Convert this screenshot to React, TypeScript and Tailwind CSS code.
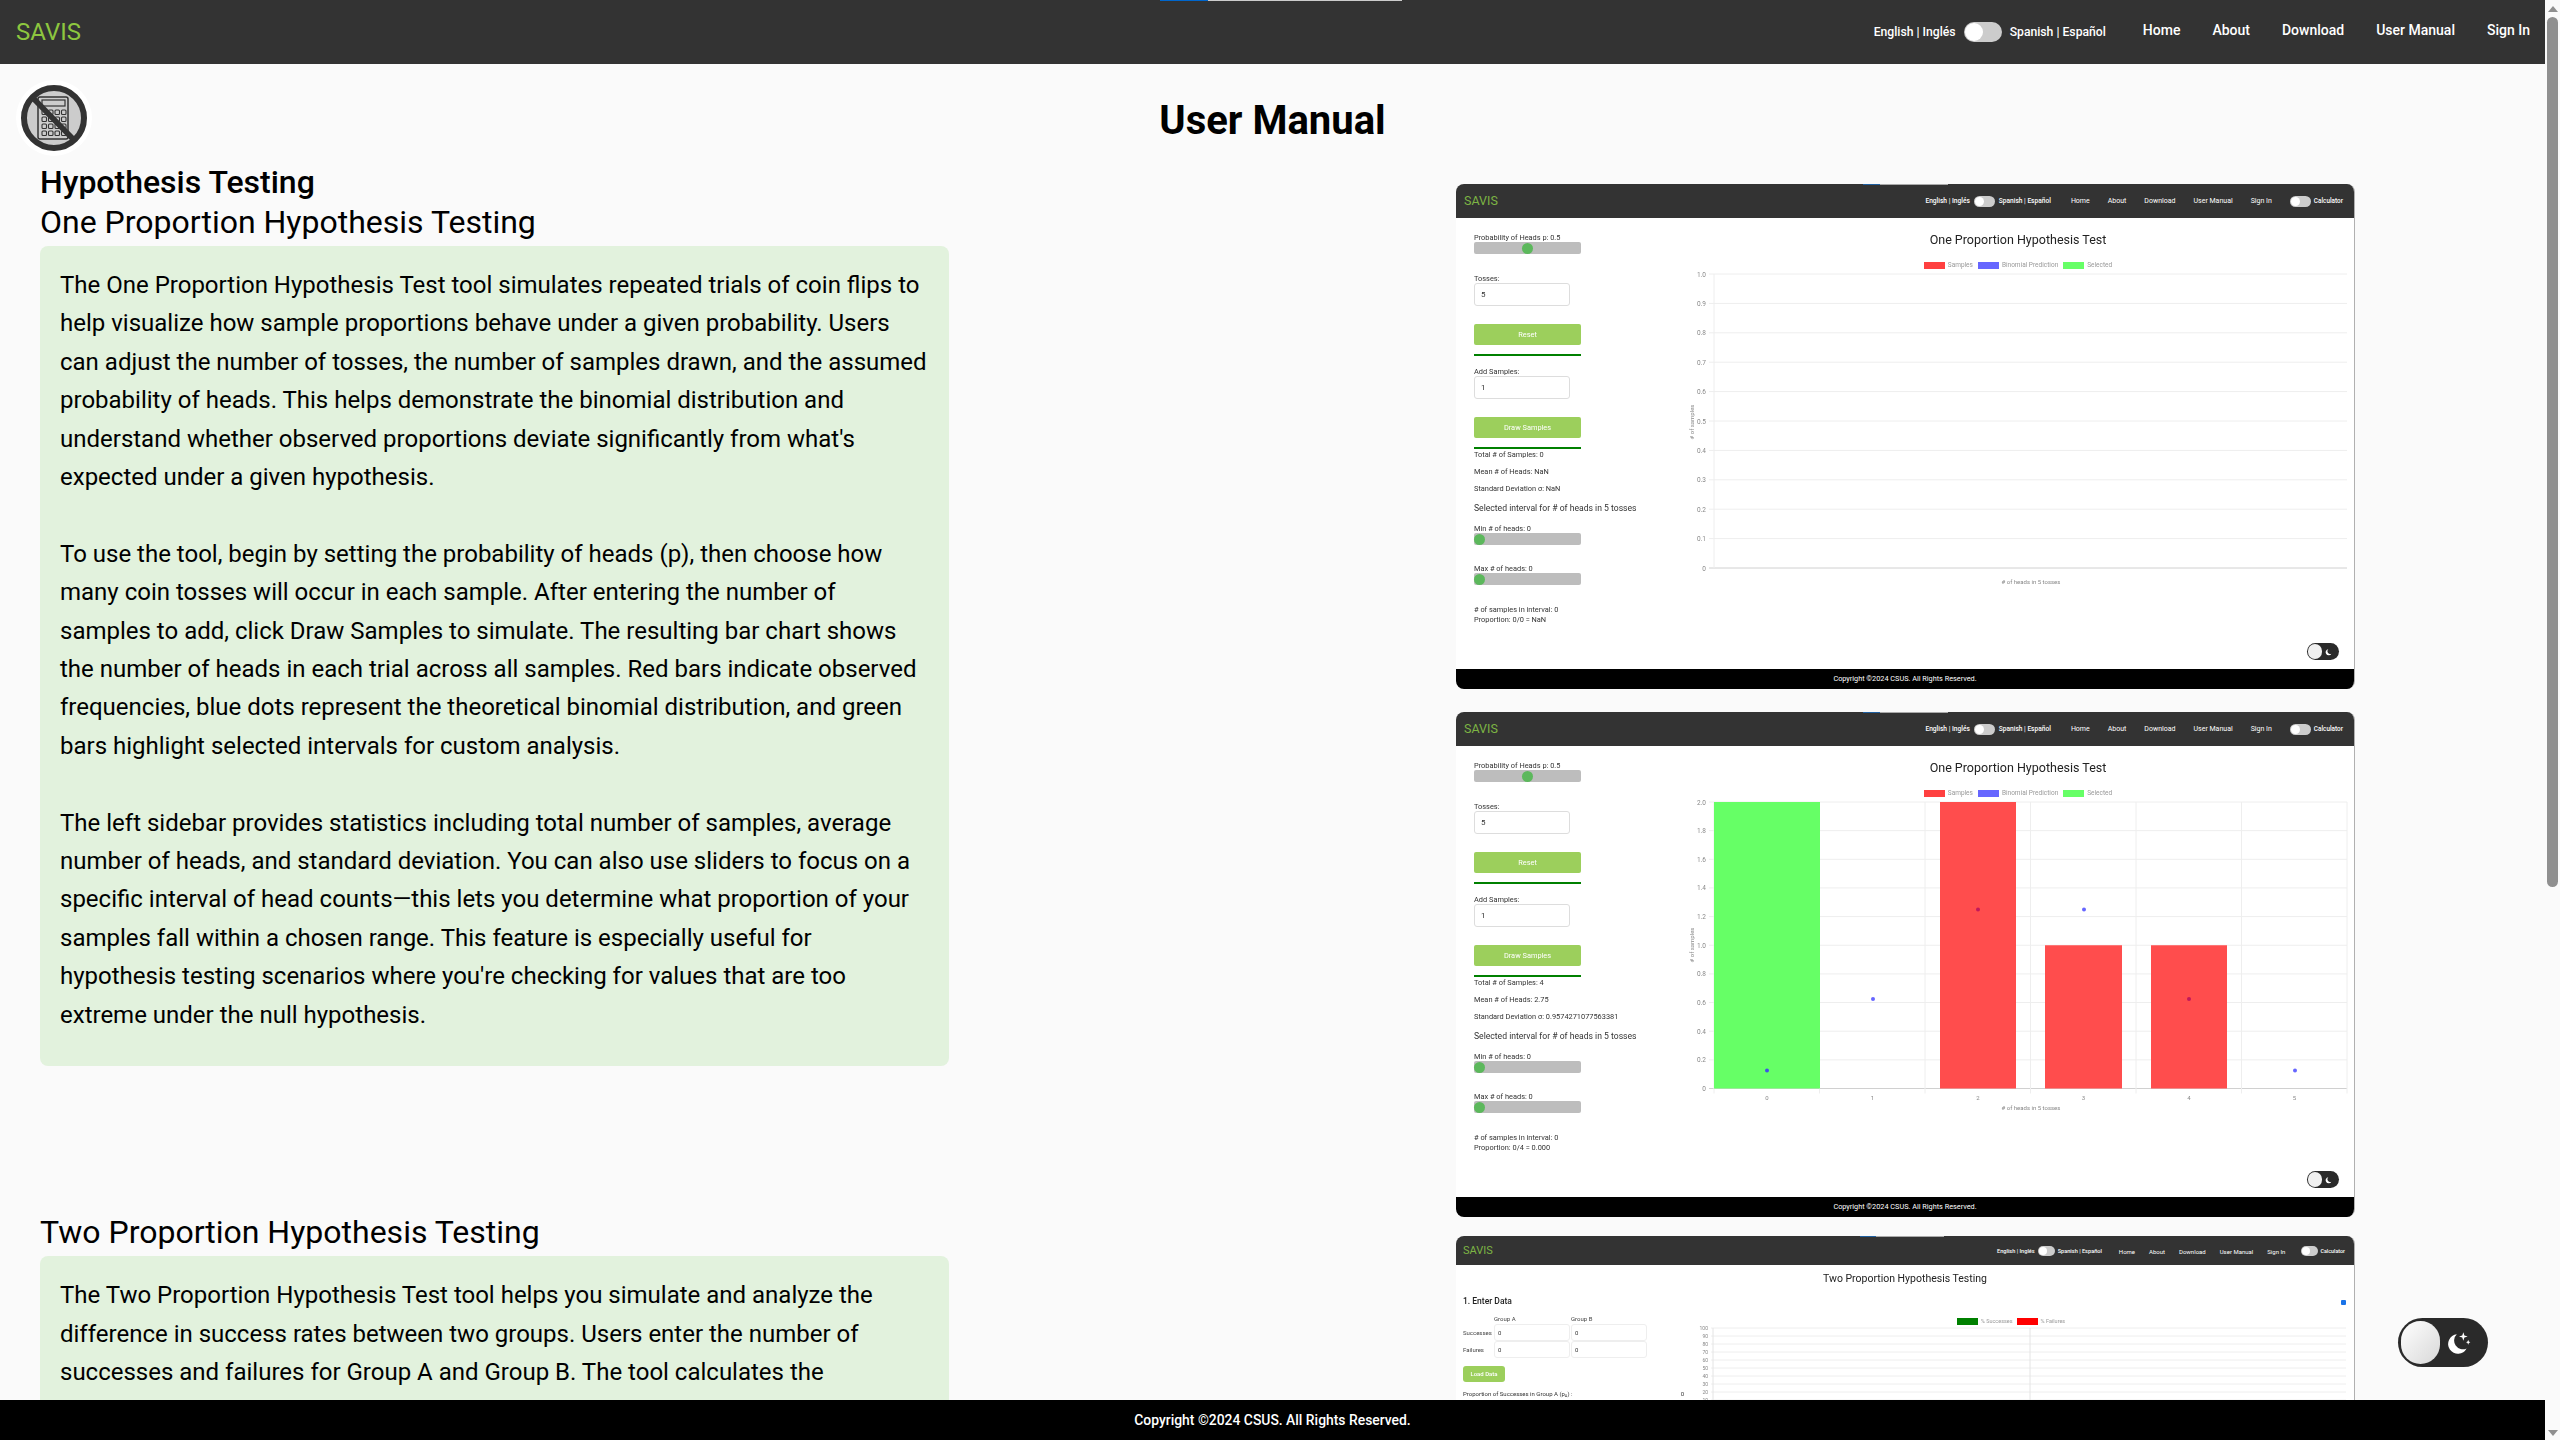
import React from 'react';

const paragraphs = [
  "The One Proportion Hypothesis Test tool simulates repeated trials of coin flips to help visualize how sample proportions behave under a given probability. Users can adjust the number of tosses, the number of samples drawn, and the assumed probability of heads. This helps demonstrate the binomial distribution and understand whether observed proportions deviate significantly from what's expected under a given hypothesis.",
  "To use the tool, begin by setting the probability of heads (p), then choose how many coin tosses will occur in each sample. After entering the number of samples to add, click Draw Samples to simulate. The resulting bar chart shows the number of heads in each trial across all samples. Red bars indicate observed frequencies, blue dots represent the theoretical binomial distribution, and green bars highlight selected intervals for custom analysis.",
  "The left sidebar provides statistics including total number of samples, average number of heads, and standard deviation. You can also use sliders to focus on a specific interval of head counts\u2014this lets you determine what proportion of your samples fall within a chosen range. This feature is especially useful for hypothesis testing scenarios where you're checking for values that are too extreme under the null hypothesis.",
];

const CalculatorBadge = () => (
  <svg viewBox="0 0 76 76" className="absolute left-4 top-4 w-[76px] h-[76px] blur-[0.4px]">
    <circle cx="38" cy="38" r="38" fill="#ffffff" />
    <circle cx="38" cy="38" r="30" fill="#cccccc" stroke="#333333" strokeWidth="6" />
    <rect x="22" y="17" width="30" height="42" rx="2" fill="none" stroke="#333333" strokeWidth="1.5" />
    <rect x="26" y="20" width="23" height="6" fill="none" stroke="#333333" strokeWidth="1.2" />
    {[30, 37, 44, 51].map(y =>
      [26, 32.5, 39, 45.5].map(x => (
        <rect key={`${x}-${y}`} x={x} y={y} width="4.5" height="4.5" rx="1" fill="none" stroke="#333333" strokeWidth="1.1" />
      ))
    )}
    <line x1="16" y1="17" x2="57" y2="59" stroke="#333333" strokeWidth="5.5" />
  </svg>
);

const DarkToggle = () => (
  <div className="absolute right-[57px] bottom-[33px] w-[90px] h-[49px] rounded-full bg-[#2a2a2a] flex items-center pl-[3px] z-10">
    <div className="w-[39px] h-[43px] rounded-full bg-gradient-to-br from-[#ffffff] to-[#d8d8d8]" />
    <svg viewBox="0 0 24 24" className="ml-[6px] w-[26px] h-[26px]" fill="#ffffff">
      <path d="M10 4a9 9 0 1 0 9 13 8 8 0 0 1-9-13z" />
      <path d="M16 2l1 3 3 1-3 1-1 3-1-3-3-1 3-1zM20.500 9l.6 1.700 1.400.6-1.400.6-.6 1.700-.6-1.700-1.400-.6 1.400-.6z" />
    </svg>
  </div>
);

const MiniDarkToggle = () => (
  <div className="absolute right-[15px] bottom-[29px] w-[32px] h-[17px] rounded-full bg-[#2a2a2a] flex items-center pl-[1px]">
    <div className="w-[14px] h-[15px] rounded-full bg-[#f0f0f0]" />
    <svg viewBox="0 0 24 24" className="ml-[3px] w-[8px] h-[8px]" fill="#ffffff">
      <path d="M10 4a9 9 0 1 0 9 13 8 8 0 0 1-9-13z" />
    </svg>
  </div>
);

const MiniSwitch = ({ small }: { small?: boolean }) => (
  <div className={small ? "w-[17px] h-[10px] rounded-full bg-[#cccccc] flex items-center pl-[1px]" : "w-[21px] h-[11px] rounded-full bg-[#cccccc] flex items-center pl-[1px]"}>
    <div className={small ? "w-[8px] h-[8px] rounded-full bg-white" : "w-[9px] h-[9px] rounded-full bg-white"} />
  </div>
);

const MiniNav = ({ compact }: { compact?: boolean }) => (
  <div className={compact
    ? "relative h-[29px] shrink-0 bg-[#333333] flex items-center pt-px pl-[7px] pr-[9px] text-white text-[5.600px] font-['Roboto',sans-serif]"
    : "relative h-[34px] shrink-0 bg-[#333333] flex items-center pt-px pl-[8px] pr-[11px] text-white text-[6.600px] font-['Roboto',sans-serif]"}>
    <div className={compact ? "absolute top-0 left-[404px] w-[16px] h-px bg-[#1f5f9f]" : "absolute top-0 left-[407px] w-[17px] h-px bg-[#1f5f9f]"} />
    <div className={compact ? "absolute top-0 left-[420px] w-[68px] h-px bg-[#aaaaaa]" : "absolute top-0 left-[424px] w-[68px] h-px bg-[#aaaaaa]"} />
    <span className={compact ? "text-[11px] text-[#7db544]" : "text-[12.500px] text-[#7db544]"}>SAVIS</span>
    <div className={compact ? "ml-auto flex items-center gap-[3px] font-medium" : "ml-auto flex items-center gap-[4px] font-medium"}>
      <span>English | Inglés</span>
      <MiniSwitch small={compact} />
      <span>Spanish | Español</span>
    </div>
    <div className={compact ? "ml-[17px] flex items-center gap-[14px] text-[6px]" : "ml-[20px] flex items-center gap-[18px] text-[7px]"}>
      <span>Home</span>
      <span>About</span>
      <span>Download</span>
      <span>User Manual</span>
      <span>Sign In</span>
    </div>
    <div className={compact ? "ml-[16px] flex items-center gap-[2px] font-medium text-[5.400px]" : "ml-[18px] flex items-center gap-[3px] font-medium text-[6.400px]"}>
      <MiniSwitch small={compact} />
      <span>Calculator</span>
    </div>
  </div>
);

const MiniFooter = () => (
  <div className="h-[20px] shrink-0 bg-black flex items-center justify-center text-white text-[7.300px]">
    Copyright ©2024 CSUS. All Rights Reserved.
  </div>
);

const MiniSlider = ({ thumb }: { thumb: 'mid' | 'start' }) => (
  <div className={thumb === 'mid'
    ? "w-[107px] h-[12px] rounded-[2px] bg-[#bdbdbd] flex items-center justify-center"
    : "w-[107px] h-[12px] rounded-[2px] bg-[#bdbdbd] flex items-center"}>
    <div className="w-[11px] h-[11px] rounded-full bg-[#5cb85c]" />
  </div>
);

const MiniInput = ({ value }: { value: string }) => (
  <div className="w-[96px] h-[23px] rounded-[3px] border border-[#dddddd] bg-white flex items-center pl-[6px] text-[8px] text-[#333333]">{value}</div>
);

const MiniButton = ({ label, className }: { label: string; className: string }) => (
  <div className={`w-[107px] h-[21px] rounded-[2px] bg-[#9ccf5c] flex items-center justify-center text-white text-[7.400px] ${className}`}>{label}</div>
);

const Sidebar = ({ total, mean, sd, proportion }: { total: string; mean: string; sd: string; proportion: string }) => (
  <div className="w-[225px] shrink-0 pl-[18px] pt-[14px] text-[7.400px] leading-[12px] text-[#333333]">
    <div className="h-[10px] whitespace-nowrap">Probability of Heads p: 0.5</div>
    <MiniSlider thumb="mid" />
    <div className="mt-[19px] h-[10px]">Tosses:</div>
    <MiniInput value="5" />
    <MiniButton label="Reset" className="mt-[18px]" />
    <div className="mt-[9px] w-[107px] h-[2px] bg-[#008000]" />
    <div className="mt-[10px] h-[10px]">Add Samples:</div>
    <MiniInput value="1" />
    <MiniButton label="Draw Samples" className="mt-[18px]" />
    <div className="mt-[9px] w-[107px] h-[2px] bg-[#008000]" />
    <div className="h-[10px]">Total # of Samples: {total}</div>
    <div className="mt-[7px] h-[10px]">Mean # of Heads: {mean}</div>
    <div className="mt-[7px] h-[10px] whitespace-nowrap">Standard Deviation σ: {sd}</div>
    <div className="mt-[9px] h-[10px] text-[8.600px] whitespace-nowrap">Selected interval for # of heads in 5 tosses</div>
    <div className="mt-[11px] h-[10px]">Min # of heads: 0</div>
    <MiniSlider thumb="start" />
    <div className="mt-[18px] h-[10px]">Max # of heads: 0</div>
    <MiniSlider thumb="start" />
    <div className="mt-[19px] h-[10px]"># of samples in interval: 0</div>
    <div className="h-[10px]">Proportion: {proportion}</div>
  </div>
);

const Legend = ({ items, className }: { items: { label: string; color: string }[]; className: string }) => (
  <div className={className}>
    {items.map(item => (
      <div key={item.label} className="flex items-center gap-[3px]">
        <div className="w-[21px] h-[7px]" style={{ backgroundColor: item.color }} />
        <span>{item.label}</span>
      </div>
    ))}
  </div>
);

const chartLegend = [
  { label: 'Samples', color: '#ff4040' },
  { label: 'Binomial Prediction', color: '#6666ff' },
  { label: 'Selected', color: '#66ff66' },
];

// plot area inside the svg: x 33..666
const EmptyChart = () => {
  const ticks = ['1.0', '0.9', '0.8', '0.7', '0.6', '0.5', '0.4', '0.3', '0.2', '0.1', '0'];
  return (
    <svg width="674" height="330" className="block" fontFamily="Roboto, sans-serif">
      {ticks.map((t, i) => {
        const y = 4 + i * 29.4;
        return (
          <g key={t}>
            <line x1="28" x2="666" y1={y} y2={y} stroke={i === 10 ? '#d0d0d0' : '#eeeeee'} />
            <text x="25" y={y + 2.500} textAnchor="end" fontSize="6.500" fill="#888888">{t}</text>
          </g>
        );
      })}
      <line x1="33" x2="33" y1="4" y2="298" stroke="#eeeeee" />
      <text transform="translate(13,152) rotate(-90)" textAnchor="middle" fontSize="6" fill="#888888"># of samples</text>
      <text x="350" y="314" textAnchor="middle" fontSize="6" fill="#888888"># of heads in 5 tosses</text>
    </svg>
  );
};

const BarChart = () => {
  const ticks = ['2.0', '1.8', '1.6', '1.4', '1.2', '1.0', '0.8', '0.6', '0.4', '0.2', '0'];
  const step = 105.5;
  const top = 4;
  const h = 286.5;
  const bars = [
    { x: 33, w: 106, v: 2, fill: '#66ff66' },
    { x: 259, w: 76, v: 2, fill: '#ff4d4d' },
    { x: 364, w: 77, v: 1, fill: '#ff4d4d' },
    { x: 470, w: 76, v: 1, fill: '#ff4d4d' },
  ];
  const dots = [
    { x: 86, v: 0.125, fill: '#3f51e8' },
    { x: 192, v: 0.625, fill: '#6666ff' },
    { x: 297, v: 1.25, fill: '#c2185b' },
    { x: 403, v: 1.25, fill: '#6666ff' },
    { x: 508, v: 0.625, fill: '#c2185b' },
    { x: 614, v: 0.125, fill: '#6666ff' },
  ];
  return (
    <svg width="674" height="330" className="block" fontFamily="Roboto, sans-serif">
      {ticks.map((t, i) => {
        const y = top + (i * h) / 10;
        return (
          <g key={t}>
            <line x1="28" x2="666" y1={y} y2={y} stroke={i === 10 ? '#d0d0d0' : '#eeeeee'} />
            <text x="25" y={y + 2.500} textAnchor="end" fontSize="6.500" fill="#888888">{t}</text>
          </g>
        );
      })}
      {[0, 1, 2, 3, 4, 5, 6].map(i => (
        <line key={i} x1={33 + i * step} x2={33 + i * step} y1={top} y2={top + h + 5} stroke="#eeeeee" />
      ))}
      {bars.map(b => (
        <rect key={b.x} x={b.x} y={top + h - (b.v / 2) * h} width={b.w} height={(b.v / 2) * h} fill={b.fill} />
      ))}
      {dots.map(d => (
        <circle key={d.x} cx={d.x} cy={top + h - (d.v / 2) * h} r="2" fill={d.fill} />
      ))}
      {[0, 1, 2, 3, 4, 5].map(i => (
        <text key={i} x={86 + i * step} y={top + h + 11} textAnchor="middle" fontSize="6" fill="#888888">{i}</text>
      ))}
      <text transform="translate(13,147) rotate(-90)" textAnchor="middle" fontSize="6" fill="#888888"># of samples</text>
      <text x="350" y="312" textAnchor="middle" fontSize="6" fill="#888888"># of heads in 5 tosses</text>
    </svg>
  );
};

const OneProportionShot = ({ children, sidebar, className }: { children: React.ReactNode; sidebar: React.ReactNode; className?: string }) => (
  <div className={`relative w-[899px] h-[505px] shrink-0 rounded-lg overflow-hidden bg-white border-r border-[#b0b0b0] flex flex-col font-['Roboto',sans-serif] blur-[0.3px] ${className ?? ''}`}>
    <MiniNav />
    <div className="flex-1 flex min-h-0">
      {sidebar}
      <div className="flex-1 flex flex-col items-center pt-[14px]">
        <div className="h-[16px] leading-[16px] text-[12.500px] text-[#222222]">One Proportion Hypothesis Test</div>
        <Legend items={chartLegend} className="mt-[13px] h-[9px] flex items-center gap-[5px] text-[6.500px] text-[#999999]" />
        <div className="self-stretch">{children}</div>
      </div>
    </div>
    <MiniDarkToggle />
    <MiniFooter />
  </div>
);

const TwoProportionChart = () => {
  const ticks = ['100', '90', '80', '70', '60', '50', '40', '30', '20', '10'];
  return (
    <svg width="674" height="90" className="block" fontFamily="Roboto, sans-serif">
      {ticks.map((t, i) => {
        const y = 2 + i * 8;
        return (
          <g key={t}>
            <line x1="30" x2="665" y1={y} y2={y} stroke="#eeeeee" />
            <text x="27" y={y + 2} textAnchor="end" fontSize="5" fill="#888888">{t}</text>
          </g>
        );
      })}
      <line x1="32" x2="32" y1="2" y2="90" stroke="#e4e4e4" />
      <line x1="349" x2="349" y1="2" y2="90" stroke="#e4e4e4" />
    </svg>
  );
};

const GroupInput = () => (
  <div className="w-[76px] h-[17px] rounded-[3px] border border-[#eeeeee] bg-white flex items-center pl-[3px] text-[6px] text-[#333333]">0</div>
);

const TwoProportionShot = () => (
  <div className="relative w-[899px] h-[400px] shrink-0 rounded-t-lg overflow-hidden bg-white border-r border-[#b0b0b0] flex flex-col font-['Roboto',sans-serif] blur-[0.3px]">
    <MiniNav compact />
    <div className="pt-[8px] h-[20px] leading-[12px] text-center text-[10.500px] text-[#222222]">Two Proportion Hypothesis Testing</div>
    <div className="flex mt-[10px]">
      <div className="w-[225px] shrink-0 pl-[7px] text-[6px] leading-[10px] text-[#444444]">
        <div className="h-[10px] leading-[12px] text-[8.500px] font-medium text-[#222222]">1. Enter Data</div>
        <div className="mt-[9px] h-[10px] flex pl-[31px]">
          <span className="w-[77px]">Group A</span>
          <span>Group B</span>
        </div>
        <div className="flex items-center gap-px">
          <span className="w-[30px]">Successes</span>
          <GroupInput />
          <GroupInput />
        </div>
        <div className="flex items-center gap-px">
          <span className="w-[30px]">Failures</span>
          <GroupInput />
          <GroupInput />
        </div>
        <div className="mt-[8px] w-[42px] h-[16px] rounded-[3px] bg-[#9ccf5c] flex items-center justify-center text-white font-medium">Load Data</div>
        <div className="mt-[7px] h-[10px] w-[221px] flex justify-between text-[#333333] whitespace-nowrap">
          <span>Proportion of Successes in Group A (p<sub className="text-[4px]">A</sub>) :</span>
          <span>0</span>
        </div>
      </div>
      <div className="flex-1 flex flex-col">
        <div className="h-[12px] flex justify-end items-center pt-[2px] pr-[9px]">
          <div className="w-[5px] h-[5px] rounded-[1px] bg-[#1a73e8]" />
        </div>
        <Legend
          items={[{ label: '% Successes', color: '#008000' }, { label: '% Failures', color: '#ff0000' }]}
          className="mt-[9px] h-[10px] flex items-center justify-center gap-[4px] text-[5.500px] text-[#999999] pr-[14px]"
        />
        <TwoProportionChart />
      </div>
    </div>
  </div>
);

const App = () => (
  <div className="h-screen flex overflow-hidden bg-[#fafafa] text-black font-['Roboto',sans-serif]">
    <div className="flex-1 min-w-0 flex flex-col relative">
      <header className="relative h-16 shrink-0 bg-[#333333] flex items-center pl-4 pr-[15px] text-white">
        <div className="absolute top-0 left-[1160px] w-12 h-px bg-[#0066cc]" />
        <div className="absolute top-0 left-[1208px] w-[194px] h-px bg-[#cccccc]" />
        <span className="text-[24px] text-[#8dc63f]">SAVIS</span>
        <div className="ml-auto flex items-center text-[12.200px] font-medium">
          <span>English | Inglés</span>
          <div className="mx-2 w-[38px] h-5 rounded-full bg-[#cccccc] flex items-center pl-px">
            <div className="w-[18px] h-[18px] rounded-full bg-white" />
          </div>
          <span>Spanish | Español</span>
        </div>
        <nav className="ml-[37px] -mt-[3px] flex items-center gap-8 text-[14px] font-medium">
          <span>Home</span>
          <span>About</span>
          <span>Download</span>
          <span>User Manual</span>
          <span>Sign In</span>
        </nav>
      </header>

      <main className="relative flex-1 min-h-0 overflow-hidden">
        <CalculatorBadge />
        <h1 className="pt-[33px] text-center text-[40px] leading-[48px] font-bold">User Manual</h1>
        <div className="flex">
          <div className="w-[949px] shrink-0 ml-10 mt-[17px]">
            <h2 className="text-[32px] leading-10 font-medium">Hypothesis Testing</h2>
            <h3 className="text-[32px] leading-10">One Proportion Hypothesis Testing</h3>
            <div className="mt-[4px] w-[909px] rounded-lg bg-[#e2f2dd] px-5 pt-5 pb-[32px] text-[24px] leading-[38.4px]">
              {paragraphs.map((p, i) => (
                <p key={i} className={i > 0 ? 'mt-[38.4px]' : ''}>{p}</p>
              ))}
            </div>
            <h3 className="mt-[146px] text-[32px] leading-10">Two Proportion Hypothesis Testing</h3>
            <div className="mt-[4px] w-[909px] rounded-lg bg-[#e2f2dd] px-5 pt-5 pb-8 text-[24px] leading-[38.4px]">
              The Two Proportion Hypothesis Test tool helps you simulate and analyze the difference in success rates between two groups. Users enter the number of successes and failures for Group A and Group B. The tool calculates the
            </div>
          </div>
          <div className="ml-[467px] mt-[39px] flex flex-col">
            <OneProportionShot
              sidebar={<Sidebar total="0" mean="NaN" sd="NaN" proportion="0/0 = NaN" />}
              className="mb-[23px]"
            >
              <EmptyChart />
            </OneProportionShot>
            <OneProportionShot
              sidebar={<Sidebar total="4" mean="2.75" sd="0.9574271077563381" proportion="0/4 = 0.000" />}
              className="mb-[19px]"
            >
              <BarChart />
            </OneProportionShot>
            <TwoProportionShot />
          </div>
        </div>
        <DarkToggle />
      </main>

      <footer className="h-10 shrink-0 bg-black flex items-center justify-center text-white text-[13.900px] font-medium">
        Copyright ©2024 CSUS. All Rights Reserved.
      </footer>
    </div>

    <div className="w-[15px] shrink-0 bg-[#fafafa] flex flex-col items-center">
      <div className="mt-[6px] w-0 h-0 border-x-[5px] border-x-transparent border-b-[6px] border-b-[#8f8f8f]" />
      <div className="mt-[5px] w-[11px] h-[870px] rounded-full bg-[#8f8f8f]" />
      <div className="mt-auto mb-[4px] w-0 h-0 border-x-[5px] border-x-transparent border-t-[6px] border-t-[#8f8f8f]" />
    </div>
  </div>
);

export default App;
